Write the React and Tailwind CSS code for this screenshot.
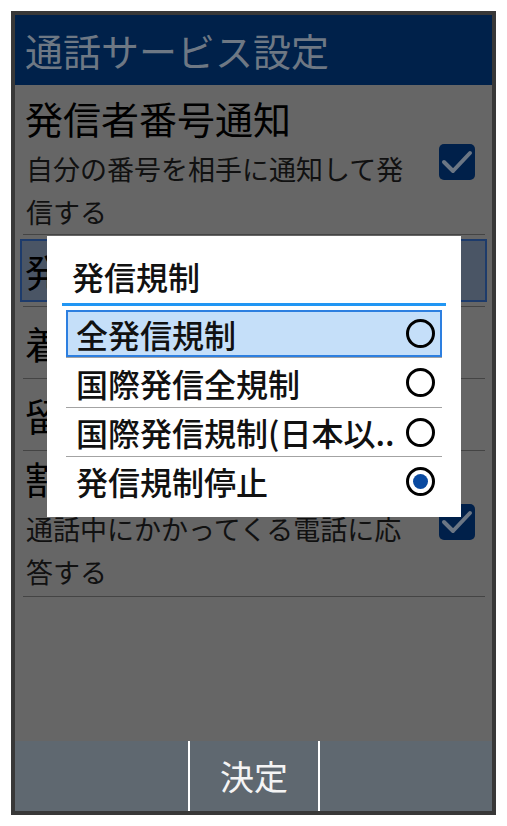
const FONT = "font-['Noto_Sans_CJK_JP','Noto_Sans',sans-serif]";

const CheckBox = () => (
  <div className="w-[36px] h-[36px] shrink-0 rounded-[5px] bg-[#00204a] flex items-center justify-center -mt-[3px]">
    <svg width="36" height="36" viewBox="0 0 36 36">
      <path d="M5 18 L14 27 L31 9" fill="none" stroke="#6b7684" strokeWidth="4" strokeLinecap="round" strokeLinejoin="round" />
    </svg>
  </div>
);

const Divider = () => <div className="mx-[8px] mr-[7px] h-px bg-[#444444]" />;

const Radio = ({ checked }) => (
  <div className="w-[29px] h-[29px] shrink-0 rounded-full border-[3px] border-black flex items-center justify-center">
    {checked && <div className="w-[15px] h-[15px] rounded-full bg-[#0a4aa0]" />}
  </div>
);

const options = [
  { label: '全発信規制', h: 'h-[47px]' },
  { label: '国際発信全規制', h: 'h-[49px]' },
  { label: '国際発信規制(日本以..', h: 'h-[48px]' },
  { label: '発信規制停止', h: 'h-[48px]', checked: true },
];

export default function App() {
  return (
    <div className={`w-[507px] h-[826px] bg-white pt-[11px] pl-[11px] ${FONT}`}>
      <div className="relative w-[485px] h-[804px] border-4 border-[#383838] flex flex-col bg-[#666666]">
        {/* header */}
        <div className="h-[70px] shrink-0 bg-[#00214a] flex items-center pl-[10px] text-[38px] leading-none text-[#6e7884]">
          通話サービス設定
        </div>

        {/* settings list (dimmed) */}
        <div className="flex-1 flex flex-col text-black">
          <div className="pt-[8px] pl-[10px] pr-[17px] pb-px">
            <div className="text-[38px] leading-[50px]">発信者番号通知</div>
            <div className="mt-[4px] flex items-start justify-between">
              <div className="w-[390px] pl-px text-[27px] leading-[43px] text-[#111]">自分の番号を相手に通知して発信する</div>
              <CheckBox />
            </div>
          </div>
          <Divider />

          <div className="h-[71px] py-[4px] px-[5px]">
            <div className="h-full border-2 border-[#1d3b6b] bg-[#4a5565] pl-[3px] flex items-center text-[38px] leading-none">
              発信規制
            </div>
          </div>
          <Divider />

          <div className="h-[71px] pl-[10px] flex items-center text-[38px] leading-none">着信規制</div>
          <Divider />

          <div className="h-[71px] pl-[10px] flex items-center text-[38px] leading-none">留守番電話</div>
          <Divider />

          <div className="pt-[2px] pl-[10px] pr-[17px] pb-[3px]">
            <div className="text-[38px] leading-[50px]">割込通話</div>
            <div className="mt-[4px] flex items-start justify-between">
              <div className="w-[390px] pl-px text-[27px] leading-[43px] text-[#111]">通話中にかかってくる電話に応答する</div>
              <CheckBox />
            </div>
          </div>
          <Divider />
        </div>

        {/* softkey bar */}
        <div className="h-[70px] shrink-0 bg-[#5f6870] flex">
          <div className="w-[173px]" />
          <div className="w-[2px] bg-white" />
          <div className="w-[128px] flex items-center justify-center text-[34px] leading-none text-[#f4f4f4]">決定</div>
          <div className="w-[2px] bg-white" />
          <div className="flex-1" />
        </div>

        {/* dialog */}
        <div className="absolute left-[32px] top-[221px] w-[414px] h-[281px] bg-white flex flex-col font-medium">
          <div className="pt-[20px] pb-[7px] pl-[25px] text-[32px] leading-[40px] text-[#111]">発信規制</div>
          <div className="mx-[15px] h-[3px] bg-[#2196f3]" />
          <div className="mx-[19px] mt-[4px] flex flex-col">
            {options.map((o, i) => (
              <div key={o.label}>
                {i > 0 && <div className="h-px bg-[#a3a3a3]" />}
                <div
                  className={`${o.h} flex items-center justify-between whitespace-nowrap text-[32px] leading-none text-[#111] ${
                    i === 0 ? 'border-2 border-[#2d7fe0] bg-[#c5dff9] pl-[8px] pr-[5px]' : 'pl-[10px] pr-[7px]'
                  }`}
                >
                  <span>{o.label}</span>
                  <Radio checked={o.checked} />
                </div>
              </div>
            ))}
          </div>
        </div>
      </div>
    </div>
  );
}
